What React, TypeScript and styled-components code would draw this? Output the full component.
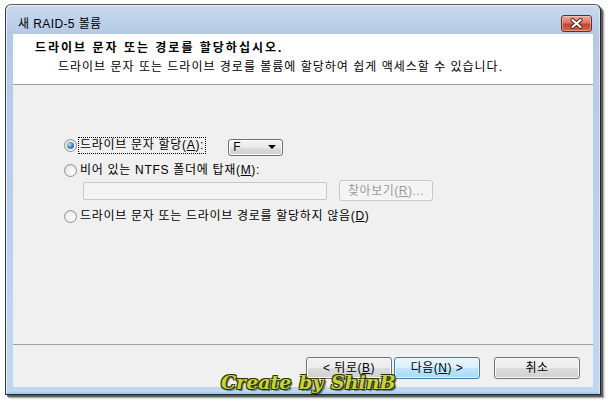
import React from "react";
import styled, { createGlobalStyle } from "styled-components";

const GlobalStyle = createGlobalStyle`
  html, body { margin: 0; padding: 0; background: #ffffff; }
  body {
    font-family: "Liberation Sans", "Noto Sans CJK KR", sans-serif;
    font-size: 12px;
    letter-spacing: 1px;
    color: #000;
  }
`;

const Page = styled.div`
  width: 610px;
  height: 405px;
  box-sizing: border-box;
  padding: 4px 0 0 5px;
  overflow: hidden;
`;

const Window = styled.div`
  position: relative;
  width: 596px;
  height: 391px;
  box-sizing: border-box;
  border: 1px solid #262626;
  border-top-color: #5a5a5a;
  border-left-color: #3a3a3a;
  border-radius: 6px 6px 0 0;
  background: linear-gradient(180deg, #c9daee 0px, #b3c9e4 30px, #bcd2ec 60%, #c2d6ef 100%);
  box-shadow: inset 1px 1px 0 #e6eef8, inset -1px 0 0 #dbe6f3, inset 0 -2px 0 #9dd4e8,
    2px 2px 0 rgba(0, 0, 0, 0.45), 3px 3px 1px rgba(0, 0, 0, 0.25), 4px 4px 2px rgba(0, 0, 0, 0.12);
  display: flex;
  flex-direction: column;
`;

const TitleBar = styled.div`
  height: 29px;
  flex: none;
  display: flex;
  align-items: flex-start;
  padding: 0 8px 0 12px;
`;

const TitleText = styled.div`
  margin-top: 11px;
  line-height: 16px;
  font-size: 12px;
  letter-spacing: 0.4px;
  color: #000;
  flex: 1;
`;

const CloseButton = styled.div`
  margin-top: 10px;
  width: 31px;
  height: 17px;
  box-sizing: border-box;
  border: 1px solid #6e2a20;
  border-radius: 3px;
  background: linear-gradient(180deg, #e9a99d 0%, #d87866 45%, #c2462f 55%, #d0674f 100%);
  box-shadow: inset 0 0 0 1px rgba(255, 220, 210, 0.45);
  display: flex;
  align-items: center;
  justify-content: center;
`;

const Client = styled.div`
  flex: 1;
  margin: 0 7px 7px 7px;
  background: #f0f0f0;
  display: flex;
  flex-direction: column;
`;

const Header = styled.div`
  height: 51px;
  box-sizing: border-box;
  flex: none;
  background: #ffffff;
  border-bottom: 1px solid #a0a0a0;
  padding: 6px 0 0 22px;
`;

const HeaderTitle = styled.div`
  font-weight: bold;
  font-size: 12px;
  line-height: 16px;
  letter-spacing: 2px;
`;

const HeaderSub = styled.div`
  margin: 3px 0 0 23px;
  font-size: 12px;
  line-height: 16px;
`;

const Main = styled.div`
  flex: 1;
  display: flex;
  flex-direction: column;
  padding: 50px 0 0 51px;
`;

const OptionRow = styled.div<{ $mt?: number }>`
  height: 20px;
  margin-top: ${(p) => p.$mt ?? 0}px;
  display: flex;
  align-items: center;
`;

const RadioCircle = styled.span<{ $checked?: boolean }>`
  position: relative;
  width: 13px;
  height: 13px;
  box-sizing: border-box;
  flex: none;
  border-radius: 50%;
  border: 1px solid #8f9091;
  background: radial-gradient(circle at 60% 65%, #fdfdfd 0%, #f0f0f0 45%, #d8d8d8 100%);
  margin-right: 2px;
  &::after {
    content: "";
    display: ${(p) => (p.$checked ? "block" : "none")};
    position: absolute;
    left: 2px;
    top: 2px;
    width: 7px;
    height: 7px;
    border-radius: 50%;
    background: radial-gradient(circle at 35% 35%, #b8e2ff 0%, #4a8cd0 45%, #1c4f96 100%);
  }
`;

const Label = styled.span<{ $focused?: boolean }>`
  line-height: 15px;
  padding: 0 1px;
  letter-spacing: 0.7px;
  outline: ${(p) => (p.$focused ? "1px dotted #000" : "none")};
  white-space: nowrap;
`;

const Key = styled.span`
  text-decoration: underline;
`;

const Combo = styled.div`
  margin-left: 23px;
  margin-top: 4px;
  width: 55px;
  height: 17px;
  box-sizing: border-box;
  border: 1px solid #707070;
  border-radius: 3px;
  background: linear-gradient(180deg, #f2f2f2 0%, #ebebeb 50%, #dddddd 51%, #cfcfcf 100%);
  box-shadow: inset 0 0 0 1px #fbfbfb;
  display: flex;
  align-items: center;
  padding: 0 6px 0 4px;
`;

const ComboText = styled.span`
  flex: 1;
  font-size: 12px;
  line-height: 14px;
`;

const ComboArrow = styled.span`
  width: 0;
  height: 0;
  border-left: 4px solid transparent;
  border-right: 4px solid transparent;
  border-top: 4px solid #000;
`;

const FolderRow = styled.div`
  height: 21px;
  display: flex;
  align-items: center;
  padding-left: 19px;
`;

const PathInput = styled.div`
  width: 244px;
  height: 18px;
  box-sizing: border-box;
  border: 1px solid #c8c8c8;
  border-radius: 2px;
  background: #f4f4f4;
`;

const Button = styled.div<{ $primary?: boolean; $disabled?: boolean; $w?: number }>`
  width: ${(p) => p.$w ?? 86}px;
  height: ${(p) => (p.$disabled ? 21 : 22)}px;
  box-sizing: border-box;
  flex: none;
  border: 1px solid ${(p) => (p.$disabled ? "#c8c8c8" : p.$primary ? "#3c7fb1" : "#707070")};
  border-radius: 3px;
  background: ${(p) =>
    p.$disabled
      ? "#f4f4f4"
      : p.$primary
      ? "linear-gradient(180deg, #eaf6fd 0%, #d9f0fc 50%, #bee6fd 51%, #a7d9f5 100%)"
      : "linear-gradient(180deg, #f2f2f2 0%, #ebebeb 50%, #dddddd 51%, #cfcfcf 100%)"};
  box-shadow: inset 0 0 0 1px ${(p) => (p.$disabled ? "#f8f8f8" : p.$primary ? "#e5f4fc" : "#fbfbfb")};
  color: ${(p) => (p.$disabled ? "#9a9a9a" : "#000")};
  display: flex;
  align-items: center;
  justify-content: center;
  font-size: 12px;
  line-height: 14px;
  letter-spacing: 0.5px;
  white-space: nowrap;
`;

const BrowseButton = styled(Button)`
  margin-left: 12px;
`;

const Footer = styled.div`
  height: 43px;
  box-sizing: border-box;
  flex: none;
  border-top: 1px solid #a0a0a0;
  display: flex;
  align-items: flex-start;
  justify-content: flex-end;
  padding: 12px 13px 0 0;
`;

const NavGroup = styled.div`
  display: flex;
  gap: 2px;
  margin-right: 14px;
`;

const Watermark = styled.div`
  position: absolute;
  left: 215px;
  top: 366px;
  font-family: "DejaVu Serif", "Liberation Serif", serif;
  font-style: italic;
  font-weight: bold;
  font-size: 19px;
  letter-spacing: 0px;
  word-spacing: 1px;
  color: #c4d43c;
  text-shadow: -1px -1px 0 #2e3400, 1px -1px 0 #2e3400, -1px 1px 0 #2e3400, 1px 1px 0 #2e3400,
    2px 2px 1px rgba(0, 0, 0, 0.5);
  white-space: nowrap;
  pointer-events: none;
`;

const CloseGlyph = () => (
  <svg width="13" height="11" viewBox="0 0 13 11">
    <path d="M2.5 2 L10.5 9 M10.5 2 L2.5 9" stroke="#5a1a10" strokeWidth="4" strokeLinecap="round" />
    <path d="M2.5 2 L10.5 9 M10.5 2 L2.5 9" stroke="#ffffff" strokeWidth="2.2" strokeLinecap="round" />
  </svg>
);

export default function App() {
  return (
    <Page>
      <GlobalStyle />
      <Window>
        <TitleBar>
          <TitleText>새 RAID-5 볼륨</TitleText>
          <CloseButton>
            <CloseGlyph />
          </CloseButton>
        </TitleBar>
        <Client>
          <Header>
            <HeaderTitle>드라이브 문자 또는 경로를 할당하십시오.</HeaderTitle>
            <HeaderSub>드라이브 문자 또는 드라이브 경로를 볼륨에 할당하여 쉽게 액세스할 수 있습니다.</HeaderSub>
          </Header>
          <Main>
            <OptionRow>
              <RadioCircle $checked />
              <Label $focused>
                드라이브 문자 할당(<Key>A</Key>):
              </Label>
              <Combo>
                <ComboText>F</ComboText>
                <ComboArrow />
              </Combo>
            </OptionRow>
            <OptionRow $mt={5}>
              <RadioCircle />
              <Label>
                비어 있는 NTFS 폴더에 탑재(<Key>M</Key>):
              </Label>
            </OptionRow>
            <FolderRow>
              <PathInput />
              <BrowseButton $disabled $w={94}>
                찾아보기(<Key>R</Key>)...
              </BrowseButton>
            </FolderRow>
            <OptionRow $mt={5}>
              <RadioCircle />
              <Label>
                드라이브 문자 또는 드라이브 경로를 할당하지 않음(<Key>D</Key>)
              </Label>
            </OptionRow>
          </Main>
          <Footer>
            <NavGroup>
              <Button>
                &lt; 뒤로(<Key>B</Key>)
              </Button>
              <Button $primary>
                다음(<Key>N</Key>) &gt;
              </Button>
            </NavGroup>
            <Button>취소</Button>
          </Footer>
        </Client>
        <Watermark>Create by ShinB</Watermark>
      </Window>
    </Page>
  );
}
